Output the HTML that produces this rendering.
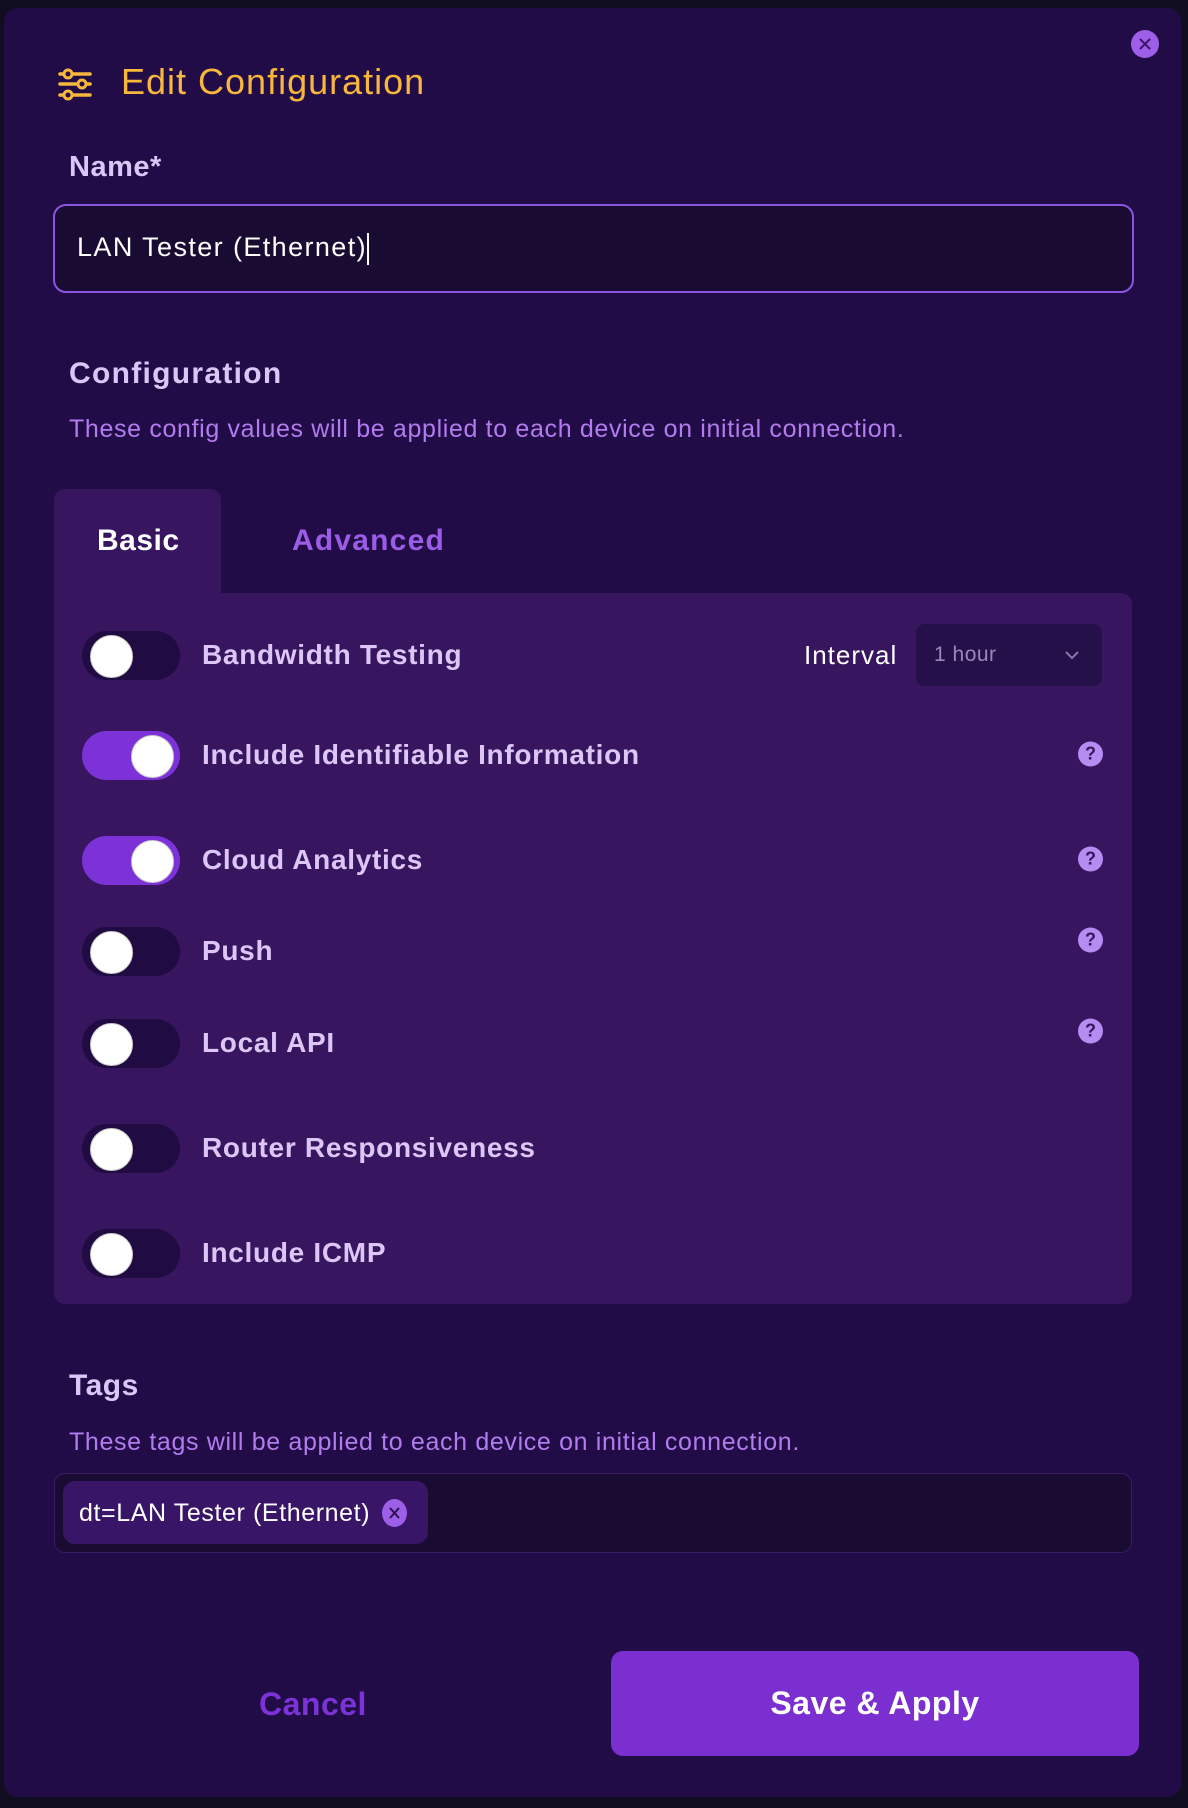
<!DOCTYPE html>
<html><head><meta charset="utf-8"><style>
*{margin:0;padding:0;box-sizing:border-box}
body{width:1188px;height:1808px;background:#100e20;font-family:"Liberation Sans",sans-serif;position:relative;overflow:hidden}
.m{position:absolute;left:4px;top:8px;width:1177px;height:1789px;background:#220c48;border-radius:14px}
.a{position:absolute;white-space:nowrap}
.tg{position:absolute;left:82px;width:98px;height:49px;border-radius:25px;background:#200b42}
.tg::after{content:"";position:absolute;top:4px;left:8px;width:41px;height:41px;border-radius:50%;background:#fff;border:1px solid #ccc}
.tg.on{background:#7c32d8}
.tg.on::after{left:49px}
.lb{position:absolute;left:202px;font-size:28px;color:#dcc6f6;font-weight:bold;letter-spacing:0.7px;transform:translateY(-50%)}
.hq{position:absolute;left:1078px;width:25px;height:25px;border-radius:50%;background:#b58cf2;color:#38165f;font-size:18px;font-weight:bold;text-align:center;line-height:25px;transform:translateY(-50%)}
.sub{font-size:25px;color:#b27cef;letter-spacing:0.65px}
</style></head><body>
<div class="m"></div>
<div class="a" style="left:1131px;top:30px;width:28px;height:28px;border-radius:50%;background:#9d5fe8">
<svg width="28" height="28" viewBox="0 0 28 28"><path d="M9 9L19 19M19 9L9 19" stroke="#3b1668" stroke-width="2"/></svg></div>
<svg class="a" style="left:56px;top:66px" width="38" height="36" viewBox="0 0 38 36">
<g stroke="#f6b73c" stroke-width="3.5" fill="none" stroke-linecap="round"><path d="M4 8H34M4 18H34M4 29H34"/></g>
<g fill="#220c48" stroke="#f6b73c" stroke-width="3"><circle cx="12" cy="8" r="4"/><circle cx="26" cy="18" r="4"/><circle cx="12" cy="29" r="4"/></g></svg>
<div class="a" style="left:121px;top:61px;font-size:36px;letter-spacing:1px;color:#f6b73c">Edit Configuration</div>
<div class="a" style="left:69px;top:151px;font-size:29px;color:#dcc6f6;font-weight:bold;letter-spacing:0.5px">Name*</div>
<div class="a" style="left:53px;top:204px;width:1081px;height:89px;border:2px solid #8b55e0;border-radius:13px;background:#190b32"></div>
<div class="a" style="left:77px;top:232px;font-size:27px;color:#fff;letter-spacing:1.4px">LAN Tester (Ethernet)<span style="display:inline-block;width:2px;height:32px;background:#fff;vertical-align:middle"></span></div>
<div class="a" style="left:69px;top:357px;font-size:30px;color:#dcc6f6;font-weight:bold;letter-spacing:1.3px">Configuration</div>
<div class="a sub" style="left:69px;top:415px">These config values will be applied to each device on initial connection.</div>
<div class="a" style="left:54px;top:489px;width:167px;height:110px;background:#37155f;border-radius:11px 11px 0 0"></div>
<div class="a" style="left:54px;top:593px;width:1078px;height:711px;background:#37155f;border-radius:0 11px 11px 11px"></div>
<div class="a" style="left:97px;top:524px;font-size:30px;color:#fff;font-weight:bold;letter-spacing:0.5px">Basic</div>
<div class="a" style="left:292px;top:524px;font-size:30px;color:#9b5de5;font-weight:bold;letter-spacing:1.2px">Advanced</div>

<div class="tg" style="top:631px"></div><div class="lb" style="top:655px">Bandwidth Testing</div>
<div class="a" style="left:804px;top:640px;font-size:26px;color:#fff;letter-spacing:1px">Interval</div>
<div class="a" style="left:916px;top:624px;width:186px;height:62px;background:#25104a;border-radius:9px"></div>
<div class="a" style="left:934px;top:643px;font-size:21px;color:#9a88b8;letter-spacing:0.5px">1 hour</div>
<svg class="a" style="left:1064px;top:649px" width="16" height="12" viewBox="0 0 16 12"><path d="M2 3L8 9L14 3" stroke="#8a78a8" stroke-width="2" fill="none"/></svg>

<div class="tg on" style="top:731px"></div><div class="lb" style="top:755px">Include Identifiable Information</div><div class="hq" style="top:754px">?</div>
<div class="tg on" style="top:836px"></div><div class="lb" style="top:860px">Cloud Analytics</div><div class="hq" style="top:859px">?</div>
<div class="tg" style="top:927px"></div><div class="lb" style="top:951px">Push</div><div class="hq" style="top:940px">?</div>
<div class="tg" style="top:1019px"></div><div class="lb" style="top:1043px">Local API</div><div class="hq" style="top:1031px">?</div>
<div class="tg" style="top:1124px"></div><div class="lb" style="top:1148px">Router Responsiveness</div>
<div class="tg" style="top:1229px"></div><div class="lb" style="top:1253px">Include ICMP</div>

<div class="a" style="left:69px;top:1369px;font-size:30px;color:#dcc6f6;font-weight:bold;letter-spacing:0.5px">Tags</div>
<div class="a sub" style="left:69px;top:1428px">These tags will be applied to each device on initial connection.</div>
<div class="a" style="left:54px;top:1473px;width:1078px;height:80px;border:1px solid #3a1c66;border-radius:11px;background:#190b32"></div>
<div class="a" style="left:63px;top:1481px;width:365px;height:63px;background:#391568;border-radius:12px"></div>
<div class="a" style="left:79px;top:1499px;font-size:25px;color:#fff;letter-spacing:0.6px">dt=LAN Tester (Ethernet)</div>
<div class="a" style="left:382px;top:1499px;width:25px;height:28px;border-radius:50%;background:#9d5fe8">
<svg width="25" height="28" viewBox="0 0 25 28"><path d="M8 9L17 19M17 9L8 19" stroke="#2a0f50" stroke-width="2"/></svg></div>
<div class="a" style="left:259px;top:1686px;font-size:32px;color:#7b32d6;font-weight:bold;letter-spacing:0.5px">Cancel</div>
<div class="a" style="left:611px;top:1651px;width:528px;height:105px;background:#7b2fd0;border-radius:12px;color:#fff;font-size:32px;font-weight:bold;text-align:center;line-height:105px;letter-spacing:0.5px">Save &amp; Apply</div>
</body></html>
